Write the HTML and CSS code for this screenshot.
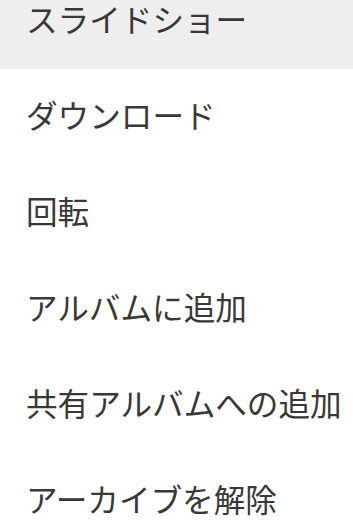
FILE: index.html
```html
<!DOCTYPE html>
<html lang="ja">

<head>
  <meta charset="UTF-8">
  <meta name="viewport" content="width=device-width, initial-scale=1.0">
  <title>メニュー</title>
  <link rel="stylesheet" href="styles.css">
</head>

<body>
  <ul class="menu">
    <li class="menu-item active">スライドショー</li>
    <li class="menu-item">ダウンロード</li>
    <li class="menu-item">回転</li>
    <li class="menu-item">アルバムに追加</li>
    <li class="menu-item">共有アルバムへの追加</li>
    <li class="menu-item">アーカイブを解除</li>
  </ul>
</body>

</html>
```

FILE: styles.css
```css
body {
  margin: 0;
  font-family: "Noto Sans CJK JP", "Noto Sans", sans-serif;
  background-color: #fff;
  overflow: hidden;
}

.menu {
  list-style: none;
  margin: -27px 0 0 0;
  /* 一行目は少しスクロールされた状態 */
  padding: 0;
}

.menu-item {
  height: 96px;
  box-sizing: border-box;
  display: flex;
  align-items: center;
  padding: 0 0 6px 26px;
  font-size: 31.6px;
  color: #383838;
  white-space: nowrap;
}

.active {
  background-color: #eeeeee;
}
```
